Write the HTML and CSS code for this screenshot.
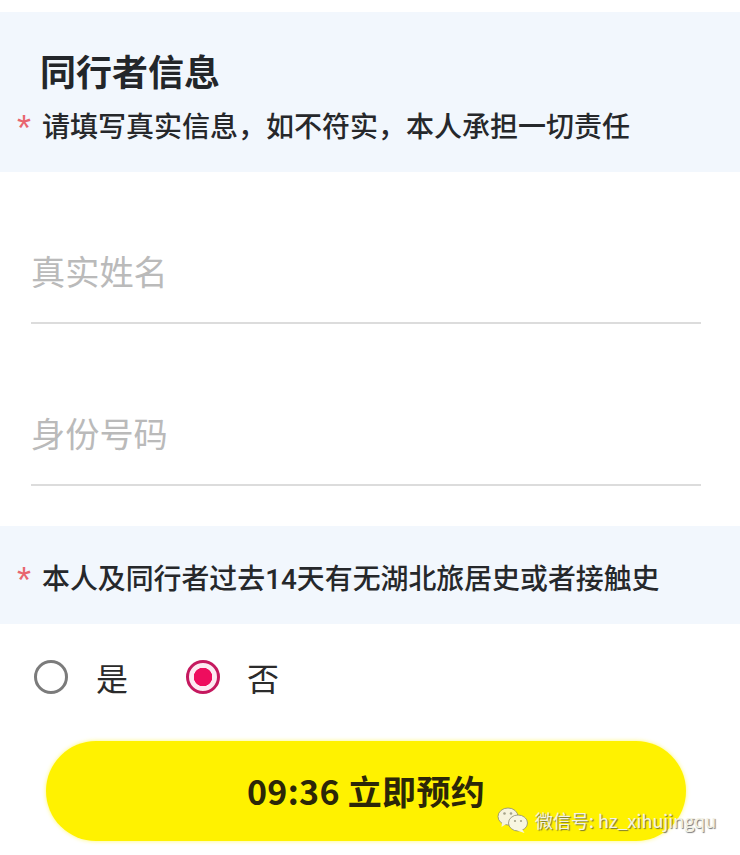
FILE: index.html
```html
<!DOCTYPE html>
<html lang="zh-CN">
<head>
<meta charset="utf-8">
<title>同行者信息</title>
<link rel="stylesheet" href="styles.css">
</head>
<body>
<main class="page">
  <section class="band band-top">
    <h1 class="title">同行者信息</h1>
    <p class="note"><span class="star">*</span><span>请填写真实信息，如不符实，本人承担一切责任</span></p>
  </section>

  <form class="fields">
    <div class="field">真实姓名</div>
    <div class="field">身份号码</div>
  </form>

  <section class="band band-question">
    <p class="note"><span class="star">*</span><span>本人及同行者过去<span class="latin">14</span>天有无湖北旅居史或者接触史</span></p>
  </section>

  <div class="choices">
    <div class="choice"><span class="radio"></span><span class="choice-label">是</span></div>
    <div class="choice choice-selected"><span class="radio radio-on"></span><span class="choice-label">否</span></div>
  </div>

  <div class="action">
    <div class="book">09:36 立即预约</div>
  </div>
</main>

<div class="mark">
  <svg class="mark-icon" width="32" height="28" viewBox="0 0 32 28" aria-hidden="true">
    <ellipse cx="11" cy="10.5" rx="10" ry="8.5" fill="#f6f3dc" stroke="#8b8a70" stroke-width="0.8"/>
    <path d="M5 16 L4.500 21 L10 17.500 Z" fill="#f6f3dc"/>
    <ellipse cx="21" cy="17" rx="9.500" ry="8" fill="#f8f6e2" stroke="#8b8a70" stroke-width="0.8"/>
    <path d="M25 23 L27.500 27 L20 24.500 Z" fill="#f8f6e2"/>
    <circle cx="7.500" cy="7.500" r="1.300" fill="#a5a389"/>
    <circle cx="14" cy="7.500" r="1.300" fill="#a5a389"/>
    <circle cx="18" cy="15" r="1.100" fill="#a5a389"/>
    <circle cx="24" cy="15" r="1.100" fill="#a5a389"/>
  </svg>
  <span class="mark-text">微信号: hz_xihujingqu</span>
</div>
</body>
</html>
```

FILE: styles.css
```css
* {
  box-sizing: border-box;
}

html,
body {
  margin: 0;
  height: 855px;
  overflow: hidden;
  background: #fff;
}

body {
  position: relative;
  font-family: "Noto Sans CJK SC", "Noto Sans", sans-serif;
  color: #26282b;
}

.page {
  display: flex;
  flex-direction: column;
  padding-top: 12px;
}

.band {
  background: #f2f7fd;
}

.band-top {
  height: 160px;
  padding-top: 33px;
}

.title {
  margin: 0 0 0 40px;
  font-size: 36px;
  line-height: 50px;
  font-weight: 700;
  color: #23262a;
}

.note {
  display: flex;
  margin: 0;
  padding-left: 17px;
  font-size: 27.900px;
  line-height: 40px;
  font-weight: 500;
  white-space: nowrap;
}

.band-top .note {
  margin-top: 10px;
  font-size: 28px;
}

.latin {
  font-family: "Roboto", sans-serif;
}

.star {
  width: 25px;
  color: #e8666f;
  font-family: "Liberation Sans", sans-serif;
  font-size: 36px;
  line-height: 48px;
  font-weight: 400;
}

.fields {
  display: flex;
  flex-direction: column;
  padding: 0 39px 0 31px;
}

.field {
  height: 162px;
  padding-top: 83px;
  border-bottom: 2px solid #dcdcdc;
  font-size: 34.200px;
  line-height: 50px;
  color: #bababa;
}

.fields .field:first-child {
  height: 152px;
  padding-top: 73px;
}

.band-question {
  height: 98px;
  margin-top: 40px;
  padding-top: 31px;
}

.choices {
  display: flex;
  gap: 58px;
  padding: 36px 0 0 34px;
  height: 117px;
}

.choice {
  display: flex;
  align-items: center;
  gap: 28px;
  height: 34px;
}

.choice-selected {
  gap: 27px;
}

.radio {
  width: 34px;
  height: 34px;
  border-radius: 50%;
  border: 3px solid #7b7b7b;
  background: #fff;
}

.radio-on {
  border-color: #c5195f;
  background: radial-gradient(circle, #ee0d5e 0 9px, #fdeaf2 9.500px);
}

.choice-label {
  font-size: 32px;
  line-height: 34px;
  color: #2b2b2b;
}

.action {
  padding-left: 46px;
}

.book {
  display: flex;
  align-items: center;
  justify-content: center;
  width: 640px;
  height: 100px;
  padding-bottom: 2px;
  border-radius: 50px;
  background: #fff200;
  box-shadow: 0 0 4px rgba(255, 242, 0, 0.55);
  font-size: 34px;
  font-weight: 700;
  letter-spacing: 0.300px;
  color: #2c2708;
}

/* account watermark over the bottom right corner */
.mark {
  position: absolute;
  left: 497px;
  top: 805px;
  display: flex;
  align-items: center;
  gap: 6px;
}

.mark-text {
  font-size: 18px;
  line-height: 30px;
  color: #f3f2e4;
  white-space: nowrap;
  text-shadow: 1px 1px 1px rgba(70, 70, 70, 0.75);
}
```
